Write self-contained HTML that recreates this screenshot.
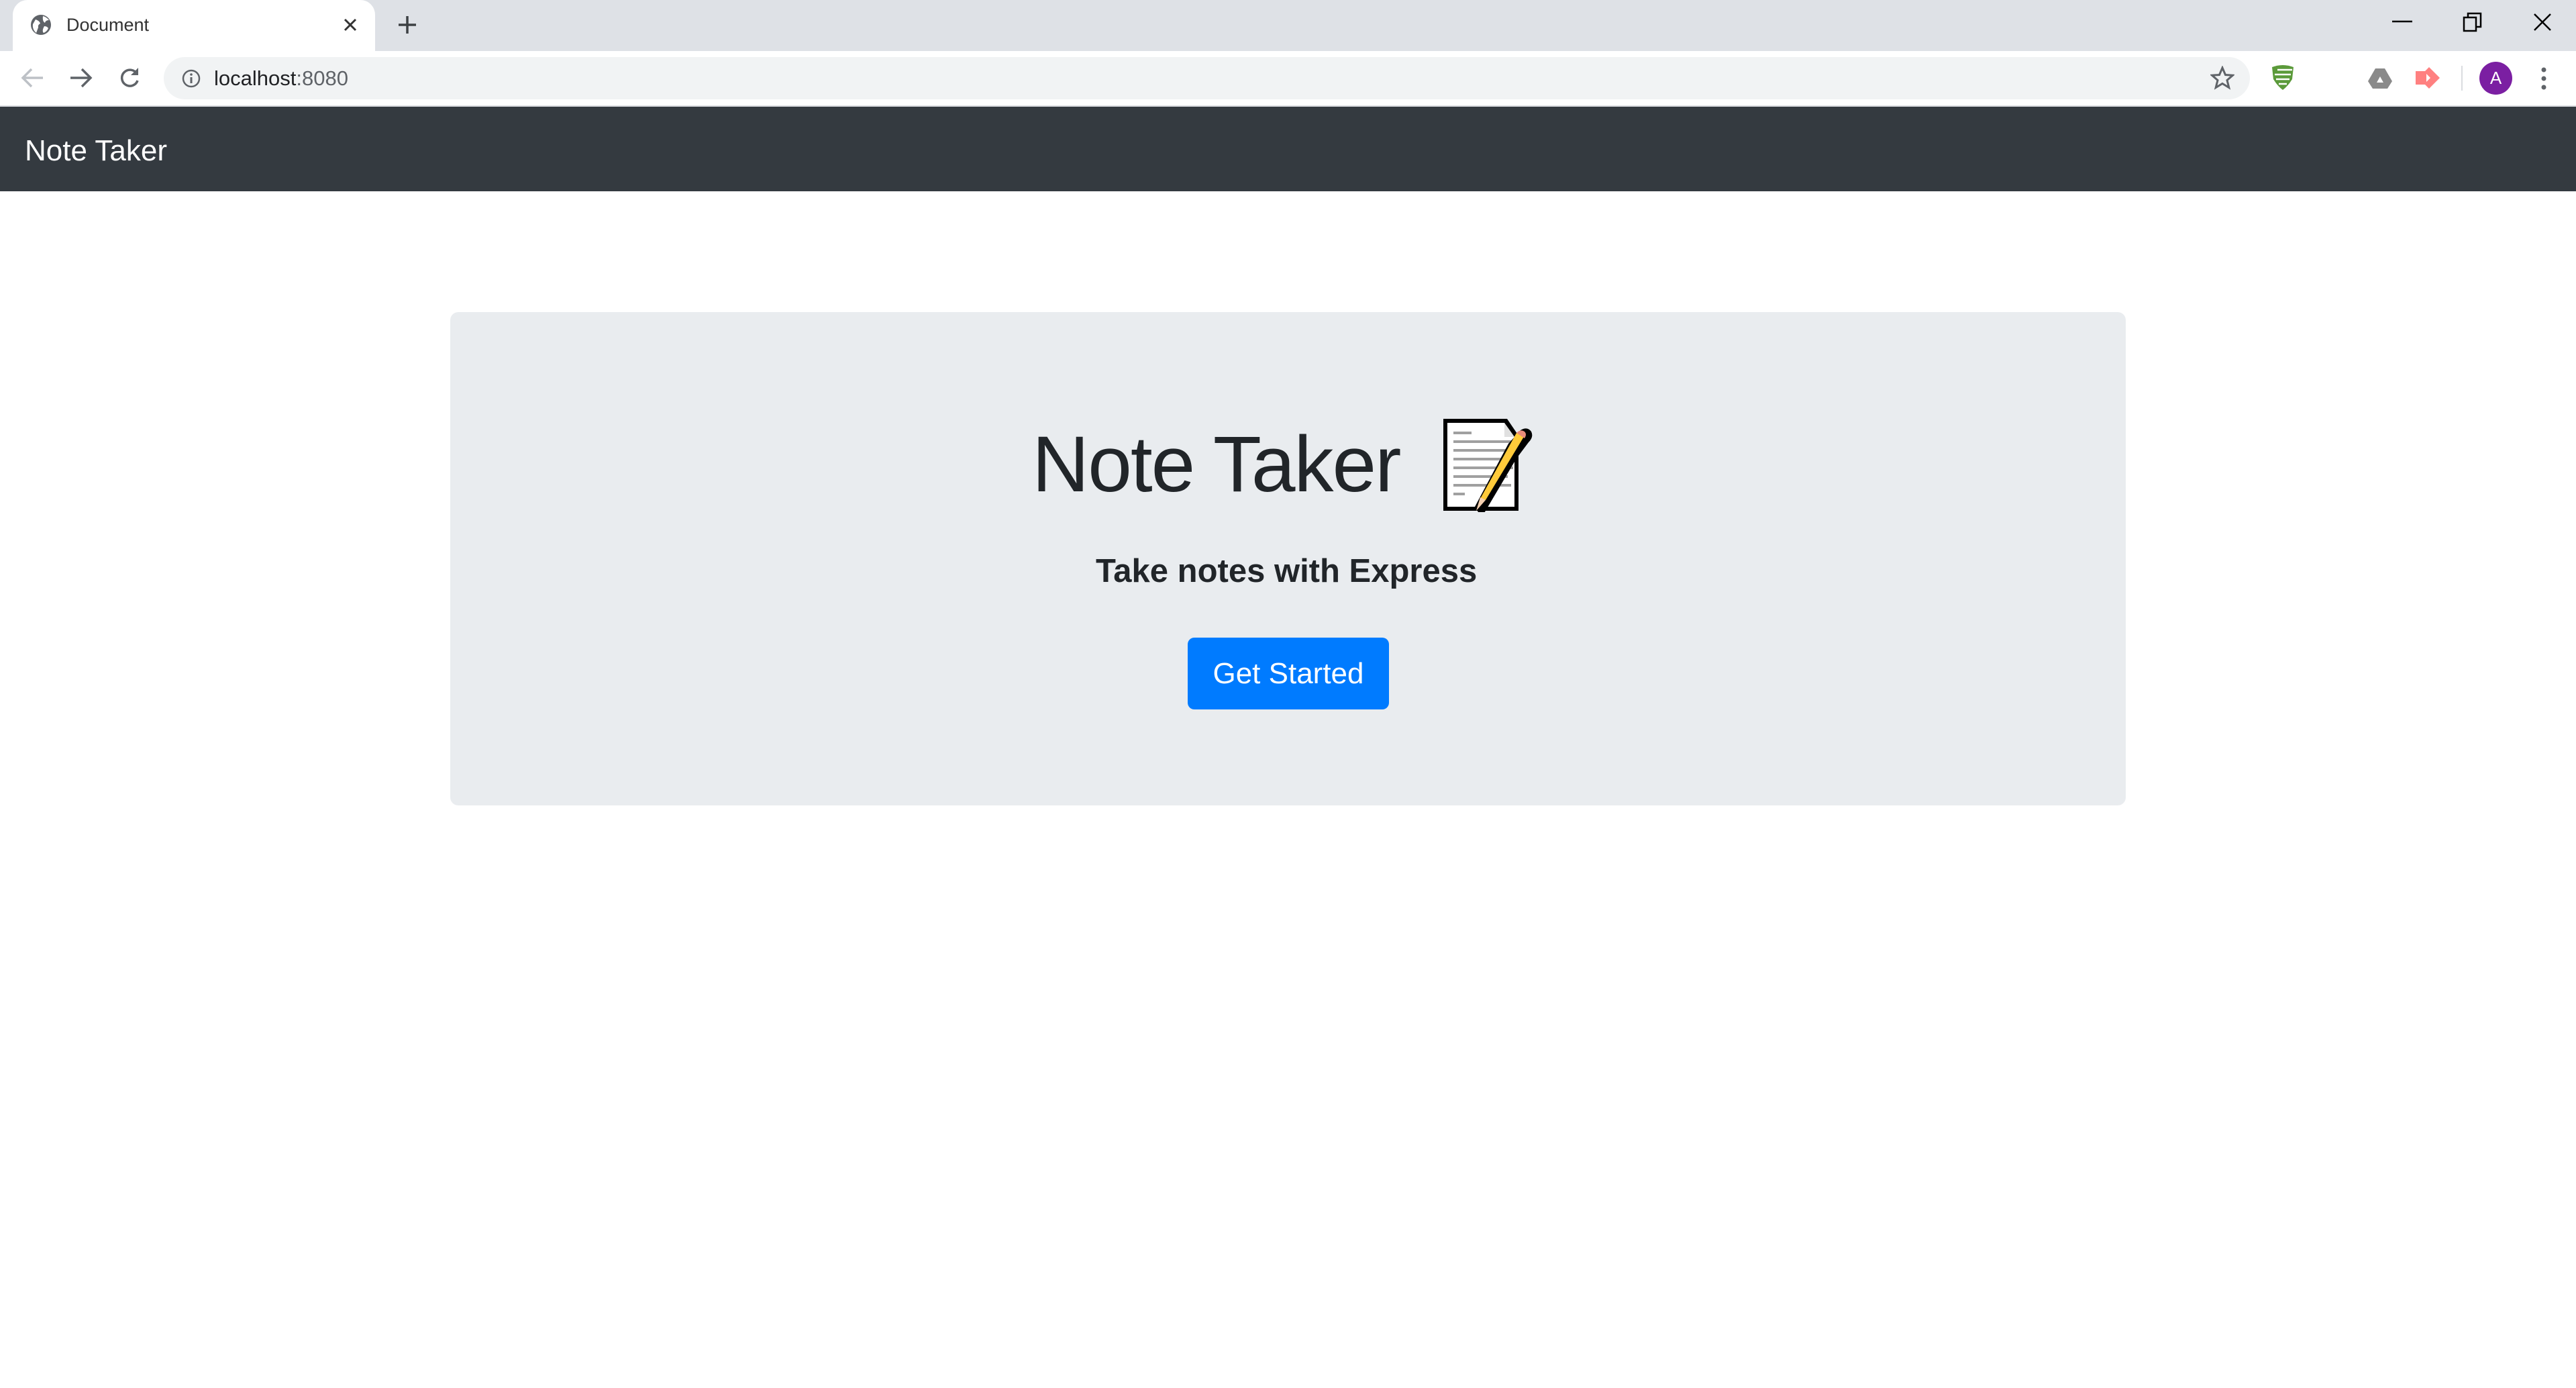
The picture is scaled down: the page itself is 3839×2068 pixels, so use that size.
<!DOCTYPE html>
<html><head><meta charset="utf-8"><style>
*{margin:0;padding:0;box-sizing:border-box}
html,body{width:3839px;height:2068px;overflow:hidden;background:#fff;font-family:"Liberation Sans",Arial,sans-serif}
.abs{position:absolute}
.t{position:absolute;white-space:nowrap;line-height:1}
</style></head><body>
<div class="abs" style="left:0;top:0;width:3839px;height:76px;background:#dee1e6"></div>
<div class="abs" style="left:19px;top:0;width:540px;height:80px;background:#fff;border-radius:22px 22px 0 0"></div>
<svg class="abs" style="left:44px;top:20px" width="34" height="34" viewBox="0 0 34 34"><circle cx="17" cy="17" r="15" fill="#5f6368"/><path d="M9 9 q6 2 7 6 q-4 2 -3 6 l-3 8 q-6-5-5-13z M20 4 q5 1 9 6 q-5 0-6 4 q-4-2-3-10z M22 19 q4 0 6 3 q-2 5-7 7 q-3-3 1-10z" fill="#fff"/></svg>
<div class="t" style="left:99px;top:24px;font-size:27px;color:#333">Document</div>
<svg class="abs" style="left:510px;top:25px" width="24" height="24"><path d="M4 4L20 20M20 4L4 20" stroke="#333" stroke-width="3"/></svg>
<svg class="abs" style="left:592px;top:22px" width="30" height="30"><path d="M15 2V28M2 15H28" stroke="#3c4043" stroke-width="3.5"/></svg>
<svg class="abs" style="left:3565px;top:22px" width="36" height="20"><path d="M0 10H30" stroke="#000" stroke-width="2.5"/></svg>
<svg class="abs" style="left:3670px;top:18px" width="30" height="30"><rect x="2" y="8" width="18" height="20" fill="none" stroke="#000" stroke-width="2.5"/><path d="M8 8V2H27V22H20" fill="none" stroke="#000" stroke-width="2.5"/></svg>
<svg class="abs" style="left:3774px;top:18px" width="30" height="30"><path d="M3 3L27 27M27 3L3 27" stroke="#000" stroke-width="2.5"/></svg>
<div class="abs" style="left:0;top:76px;width:3839px;height:81px;background:#fff"></div>
<div class="abs" style="left:0;top:157px;width:3839px;height:2px;background:#dadce0"></div>
<svg class="abs" style="left:30px;top:100px" width="36" height="32"><path d="M34 16H4M17 3L4 16L17 29" fill="none" stroke="#bdc1c6" stroke-width="3.5"/></svg>
<svg class="abs" style="left:103px;top:100px" width="36" height="32"><path d="M2 16H32M19 3L32 16L19 29" fill="none" stroke="#5f6368" stroke-width="3.5"/></svg>
<svg class="abs" style="left:176px;top:98px" width="36" height="36"><path d="M28 12A12 12 0 1 0 29 22" fill="none" stroke="#5f6368" stroke-width="3.5"/><path d="M30 3V14H19z" fill="#5f6368"/></svg>
<div class="abs" style="left:244px;top:85px;width:3109px;height:63px;background:#f1f3f4;border-radius:32px"></div>
<svg class="abs" style="left:270px;top:102px" width="30" height="30"><circle cx="15" cy="15" r="12" fill="none" stroke="#5f6368" stroke-width="2.5"/><path d="M15 13V22" stroke="#5f6368" stroke-width="3"/><circle cx="15" cy="9" r="1.8" fill="#5f6368"/></svg>
<div class="t" style="left:319px;top:101px;font-size:31px;color:#202124">localhost<span style="color:#5f6368">:8080</span></div>
<svg class="abs" style="left:3294px;top:98px" width="36" height="36"><path d="M18 3L22.5 13.5L33.5 14.2L25 21.5L27.8 32.5L18 26.5L8.2 32.5L11 21.5L2.5 14.2L13.5 13.5Z" fill="none" stroke="#5f6368" stroke-width="3"/></svg>
<svg class="abs" style="left:3384px;top:96px" width="36" height="40"><path d="M2 4Q18 -2 34 4L32 22Q26 32 18 38Q10 32 4 22Z" fill="#5b9a3a"/><path d="M10 8H32M6 15H30M8 22H28M12 29H24" stroke="#fff" stroke-width="2.5"/></svg>
<svg class="abs" style="left:3528px;top:100px" width="38" height="34"><path d="M12 2H26L37 21L30 32H8L1 21Z" fill="#8a8a8a"/><path d="M19 14L24 23H14Z" fill="#fff"/></svg>
<svg class="abs" style="left:3600px;top:100px" width="38" height="32"><path d="M0 6H14L20 0L36 16L20 32L14 26H0Z" fill="#ff8080"/><path d="M16 10L22 16L16 22Z" fill="#fff"/></svg>
<div class="abs" style="left:3668px;top:98px;width:2px;height:37px;background:#dadce0"></div>
<div class="abs" style="left:3695px;top:92px;width:49px;height:49px;border-radius:50%;background:#7b1fa2;color:#fff;font-size:26px;text-align:center;line-height:49px">A</div>
<svg class="abs" style="left:3784px;top:98px" width="14" height="38"><circle cx="7" cy="6" r="3.5" fill="#5f6368"/><circle cx="7" cy="19" r="3.5" fill="#5f6368"/><circle cx="7" cy="32" r="3.5" fill="#5f6368"/></svg>
<div class="abs" style="left:0;top:159px;width:3839px;height:126px;background:#343a40"></div>
<div class="t" style="left:37px;top:203px;font-size:44px;color:#fff">Note Taker</div>
<div class="abs" style="left:671px;top:465px;width:2497px;height:735px;background:#e9ecef;border-radius:12px"></div>
<div class="t" style="left:1538px;top:633px;font-size:118px;color:#212529;letter-spacing:-2px;font-weight:300">Note Taker</div>
<svg class="abs" style="left:2148px;top:621px" width="142" height="142" viewBox="0 0 142 142">
<path d="M3 3H98L115 28V140H3Z" fill="#000"/>
<path d="M9 9H94L109 30V134H9Z" fill="#fff"/>
<path d="M94 9V30H109Z" fill="#e0e0e0"/>
<g stroke="#a0a0a0" stroke-width="4"><path d="M18 24H45M18 37H107M18 50H99M18 63H99M18 76H107M18 89H99M18 102H104M18 115H35"/></g>
<path d="M100 40L118 20Q128 14 134 22Q138 30 130 38L112 62L60 150L50 134Z" fill="#000"/>
<path d="M124 28L66 124L58 122L112 24Z" fill="#ffca3a"/>
<path d="M112 24Q118 18 124 22Q128 26 124 32Z" fill="#e88a7a"/>
<path d="M66 124L52 140L58 120Z" fill="#f5d0b0"/>
</svg>
<div class="t" style="left:1633px;top:827px;font-size:49px;color:#212529;font-weight:bold;letter-spacing:0px">Take notes with Express</div>
<div class="abs" style="left:1770px;top:950px;width:300px;height:107px;background:#007bff;border-radius:10px;color:#fff;font-size:44px;text-align:center;line-height:107px">Get Started</div>
</body></html>
